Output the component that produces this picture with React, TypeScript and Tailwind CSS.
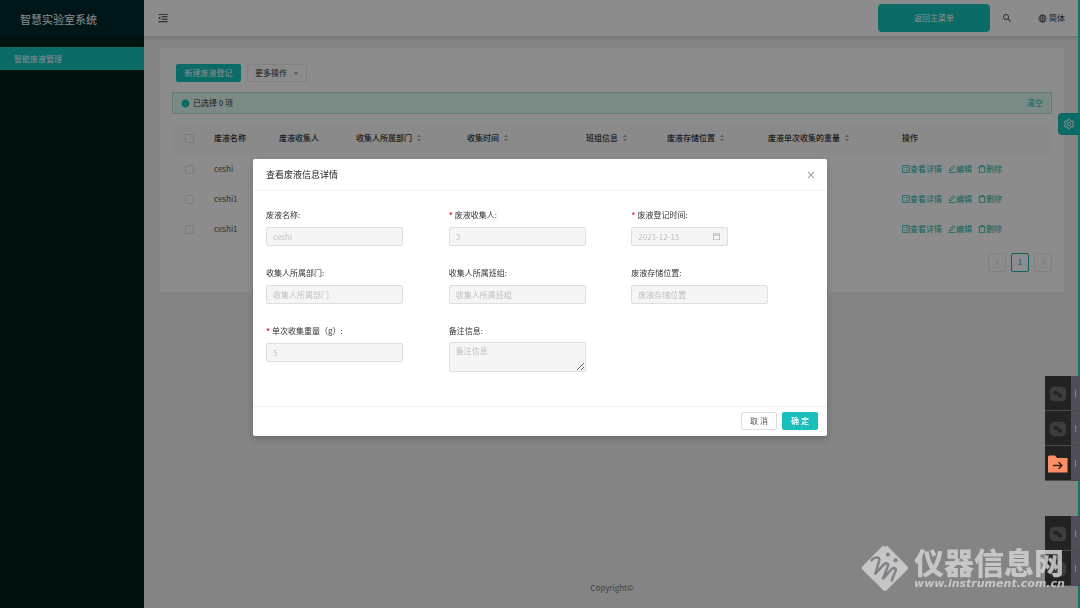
import { useState } from "react";
import {
  AiFillInfoCircle,
  AiOutlineCalendar,
  AiOutlineClose,
  AiOutlineGlobal,
  AiOutlineLeft,
  AiOutlineMenuFold,
  AiOutlineRight,
  AiOutlineSearch,
  AiOutlineSetting,
} from "react-icons/ai";

interface Column {
  title: string;
  width: string;
  sortable?: boolean;
}

interface Field {
  id: string;
  label: string;
  required?: boolean;
  type?: "text" | "date" | "textarea";
  value?: string;
  placeholder?: string;
}

const columns: Column[] = [
  { title: "废液名称", width: "w-[65px]" },
  { title: "废液收集人", width: "w-[77px]" },
  { title: "收集人所属部门", width: "w-[111px]", sortable: true },
  { title: "收集时间", width: "w-[119px]", sortable: true },
  { title: "班组信息", width: "w-[81px]", sortable: true },
  { title: "废液存储位置", width: "w-[101px]", sortable: true },
  { title: "废液单次收集的重量", width: "w-[134px]", sortable: true },
  { title: "操作", width: "w-auto" },
];

const rows = [
  { id: 1, name: "ceshi" },
  { id: 2, name: "ceshi1" },
  { id: 3, name: "ceshi1" },
];

const fields: Field[] = [
  { id: "name", label: "废液名称:", value: "ceshi" },
  { id: "collector", label: "废液收集人:", required: true, value: "3" },
  { id: "date", label: "废液登记时间:", required: true, type: "date", value: "2021-12-15" },
  { id: "dept", label: "收集人所属部门:", placeholder: "收集人所属部门" },
  { id: "team", label: "收集人所属班组:", placeholder: "收集人所属班组" },
  { id: "location", label: "废液存储位置:", placeholder: "废液存储位置" },
  { id: "weight", label: "单次收集重量（g）:", required: true, value: "5" },
  { id: "remark", label: "备注信息:", type: "textarea", placeholder: "备注信息" },
];

function SortIcon() {
  return (
    <svg viewBox="0 0 6 8" className="w-[6px] h-2 ml-1 fill-[#b0b0b0]">
      <path d="M3 0.5 5.2 3H0.8zM3 7.5 0.8 5h4.4z" />
    </svg>
  );
}

function ChevronDown() {
  return (
    <svg viewBox="0 0 6 6" className="size-[6px]" fill="none" stroke="currentColor" strokeWidth="0.7">
      <path d="M0.8 1.8 3 4.2 5.2 1.8" />
    </svg>
  );
}

function ViewIcon() {
  return (
    <svg viewBox="0 0 8 8" className="size-2" fill="none" stroke="currentColor" strokeWidth="0.8">
      <path d="M0.6 0.6h6.6v6.8H0.6zM2.2 2.6h0.8M2.2 5.2h0.8M4 2.6h2M4 5.2h2" />
    </svg>
  );
}

function EditIcon() {
  return (
    <svg viewBox="0 0 8 8" className="size-2" fill="none" stroke="currentColor" strokeWidth="0.8">
      <path d="M0.5 7.4h7M1.4 5.8 1.7 4.2 5.6 0.7 6.9 2 3 5.5z" />
    </svg>
  );
}

function TrashIcon() {
  return (
    <svg viewBox="0 0 8 8" className="size-2" fill="none" stroke="currentColor" strokeWidth="0.8">
      <path d="M0.5 1.8h7M2.6 1.8V0.6h2.8v1.2M1.4 1.8v5.6h5.2V1.8" />
    </svg>
  );
}

function Sidebar() {
  return (
    <aside className="w-36 shrink-0 bg-[#021f1b]">
      <div className="h-9 pl-5 pt-[2px] flex items-center bg-[#02292d] text-[11px] text-white">
        智慧实验室系统
      </div>
      <nav className="mt-[11px]">
        <a href="#waste" className="flex items-center h-[23px] pl-[14px] bg-[#14c4bc] text-white">
          智能废液管理
        </a>
      </nav>
    </aside>
  );
}

function Header() {
  return (
    <header className="flex items-center h-9 pl-[13px] pr-[15px] bg-white shadow-[0_1px_5px_rgba(0,21,41,0.2)]">
      <button type="button" aria-label="menu">
        <AiOutlineMenuFold className="size-3" />
      </button>
      <button type="button" className="ml-auto w-28 h-7 rounded-sm bg-[#14c4bc] text-white">
        返回主菜单
      </button>
      <button type="button" aria-label="search" className="ml-3">
        <AiOutlineSearch className="size-[10px]" />
      </button>
      <button type="button" className="flex items-center gap-[2px] ml-[26px]">
        <AiOutlineGlobal className="size-[9px]" />
        简体
      </button>
    </header>
  );
}

function RowActions() {
  return (
    <div className="flex gap-[6px] text-[#14b8ae]">
      <a href="#view" className="flex items-center">
        <ViewIcon />
        查看详情
      </a>
      <a href="#edit" className="flex items-center">
        <EditIcon />
        编辑
      </a>
      <a href="#delete" className="flex items-center">
        <TrashIcon />
        删除
      </a>
    </div>
  );
}

function WasteTable() {
  return (
    <table className="w-full mt-[9px] table-fixed text-left">
      <thead>
        <tr className="h-[31px] bg-[#fcfcfc] border-b border-[#f8f8f8]">
          <th className="w-[34px]">
            <input type="checkbox" aria-label="select all" className="block mx-auto size-[9px] appearance-none rounded-xs border border-[#dedede] bg-white" />
          </th>
          {columns.map((col) => (
            <th key={col.title} className={`${col.width} pl-2 font-medium`}>
              <span className="flex items-center whitespace-nowrap">
                {col.title}
                {col.sortable && <SortIcon />}
              </span>
            </th>
          ))}
        </tr>
      </thead>
      <tbody>
        {rows.map((row) => (
          <tr key={row.id} className="h-[30px] border-b border-[#fafafa]">
            <td>
              <input type="checkbox" aria-label={row.name} className="block mx-auto size-[9px] appearance-none rounded-xs border border-[#dedede] bg-white" />
            </td>
            <td className="pl-2 text-[#555]">{row.name}</td>
            <td colSpan={6}></td>
            <td className="pl-2">
              <RowActions />
            </td>
          </tr>
        ))}
      </tbody>
    </table>
  );
}

function FormField({ field }: { field: Field }) {
  return (
    <div className="h-[58px]">
      <label htmlFor={field.id} className="flex h-4 items-center whitespace-nowrap text-[#333]">
        {field.required && <span className="mr-[2px] font-bold text-[#e02b36]">*</span>}
        {field.label}
      </label>
      {field.type === "textarea" ? (
        <textarea
          id={field.id}
          disabled
          placeholder={field.placeholder}
          className="block w-3/4 h-[30px] mt-[3px] px-[6px] py-[2px] rounded-xs border border-[#dedede] bg-[#f5f5f5] placeholder:text-[#bfbfbf]"
        />
      ) : field.type === "date" ? (
        <div className="flex items-center w-[97px] h-[19px] mt-1 px-[6px] rounded-xs border border-[#dedede] bg-[#f5f5f5] text-[#bfbfbf]">
          <input id={field.id} type="text" disabled value={field.value} className="min-w-0 flex-1" />
          <AiOutlineCalendar className="size-[9px] text-[#aaa]" />
        </div>
      ) : (
        <input
          id={field.id}
          type="text"
          disabled
          value={field.value}
          placeholder={field.placeholder}
          className="block w-3/4 h-[19px] mt-1 px-[6px] rounded-xs border border-[#dedede] bg-[#f5f5f5] text-[#bfbfbf] placeholder:text-[#bfbfbf]"
        />
      )}
    </div>
  );
}

function DetailModal({ onClose }: { onClose: () => void }) {
  return (
    <div className="fixed inset-0 z-20 flex items-start justify-center pt-[159px] bg-black/45">
      <div role="dialog" aria-labelledby="modal-title" className="w-[574px] max-w-full rounded-xs bg-white shadow-[0_3px_9px_rgba(0,0,0,0.2)]">
        <div className="flex items-center justify-between h-8 pl-[13px] pr-[11px] border-b border-[#f3f3f3]">
          <h2 id="modal-title" className="text-[9px] text-[#262626]">查看废液信息详情</h2>
          <button type="button" aria-label="close" onClick={onClose}>
            <AiOutlineClose className="size-[10px] text-[#8c8c8c]" />
          </button>
        </div>
        <form className="grid grid-cols-3 px-[13px] pt-4 pb-[25px]">
          {fields.map((field) => (
            <FormField key={field.id} field={field} />
          ))}
        </form>
        <div className="flex justify-end gap-[5px] pt-[5px] pb-[6px] pr-[9px] border-t border-[#f0f0f0]">
          <button type="button" onClick={onClose} className="w-9 h-[18px] rounded-xs border border-[#dedede] text-[#555]">
            取 消
          </button>
          <button type="button" onClick={onClose} className="w-9 h-[18px] rounded-xs bg-[#1abfbc] font-medium text-white">
            确 定
          </button>
        </div>
      </div>
    </div>
  );
}

function LinkTile() {
  return (
    <svg viewBox="0 0 20 20" className="size-[18px]">
      <rect x="1" y="2" width="18" height="16" rx="5" fill="#3c3d3c" />
      <path d="M5 7.5c1.5-2 4-1.5 5 .5l4 2.5c1.5 1.5 0 4-2 3.5-1.5 0-2-1.5-2.5-3L6.5 10.5C5 10.5 4 9 5 7.5z" fill="#232423" />
    </svg>
  );
}

function FolderTile() {
  return (
    <svg viewBox="0 0 20 18" className="w-5 h-[18px]">
      <path d="M0 1.5 1 0.5h6l2 2.5h10.5V17.5H0z" fill="#ff8f66" />
      <path d="M5 10.5h9M10.5 7l3.5 3.5-3.5 3.5" fill="none" stroke="#3a2018" strokeWidth="1.4" />
    </svg>
  );
}

function DockItem({ folder }: { folder?: boolean }) {
  return (
    <div className="flex h-[35px] border-b border-[#4a4a4b] bg-[#222322]">
      <div className="flex items-center justify-center w-[26px] pt-px">{folder ? <FolderTile /> : <LinkTile />}</div>
      <div className="flex items-center justify-center w-[9px] bg-[#504f59]">
        <span className="w-px h-[7px] bg-[#85848e]"></span>
      </div>
    </div>
  );
}

function Watermark() {
  return (
    <div className="fixed right-4 bottom-4 z-40 flex items-end gap-[5px] text-[#d0d1d3]/85 pointer-events-none">
      <svg viewBox="0 0 50 50" className="size-12">
        <path
          d="M21 3.5 23 1.5l2 1.5 2-1.5 21 21.5q2 2 0 4L27 48q-2 2-4 0L2 27q-2-2 0-4z"
          fill="currentColor"
        />
        <path
          d="M11 17c3-4 9-4 8 0l-4 14 9-10c3-2 5 0 4 2l-5 13 9-10c3-2 5 0 4 2l-4 10"
          fill="none"
          stroke="#808183"
          strokeWidth="2.6"
          strokeLinecap="round"
          strokeLinejoin="round"
        />
        <circle cx="28" cy="11" r="2.2" fill="#808183" />
        <circle cx="36" cy="17" r="2.2" fill="#808183" />
      </svg>
      <div className="w-[150px] pb-[2px] whitespace-nowrap">
        <div className="font-['Liberation_Sans','Noto_Sans_CJK_SC',sans-serif] text-[30px] leading-7 font-black">仪器信息网</div>
        <div className="font-['DejaVu_Sans',sans-serif] text-[11px] leading-3 font-bold italic">www.instrument.com.cn</div>
      </div>
    </div>
  );
}

export default function App() {
  const [open, setOpen] = useState<boolean>(true);

  return (
    <div className="flex min-h-screen bg-[#f0f1f2] font-['Noto_Sans_CJK_SC',sans-serif] text-[8px] leading-3 text-[#333]">
      <Sidebar />
      <div className="flex flex-col flex-1 min-w-0">
        <Header />
        <main className="mx-4 mt-3 px-3 pt-4 pb-5 bg-white">
          <div className="flex gap-[6px] pl-1">
            <button type="button" className="w-[65px] h-[18px] rounded-xs bg-[#14c4bc] text-white">
              新建废液登记
            </button>
            <button type="button" className="flex items-center justify-center gap-[6px] w-[60px] h-[18px] rounded-xs border border-[#ececec]">
              更多操作
              <ChevronDown />
            </button>
          </div>
          <div className="flex items-center h-[22px] mt-[10px] px-2 border border-[#b4e2d9] bg-[#e2fbf5]">
            <AiFillInfoCircle className="size-[9px] mr-[3px] text-[#14b8ae]" />
            <span>已选择 0 项</span>
            <a href="#clear" className="ml-auto text-[#14b8ae]">清空</a>
          </div>
          <WasteTable />
          <div className="flex justify-end gap-[5px] mt-2">
            <button type="button" aria-label="previous page" className="flex items-center justify-center w-[18px] h-[19px] rounded-xs border border-[#ebebeb] text-[#bbb]">
              <AiOutlineLeft className="size-[7px]" />
            </button>
            <button type="button" className="w-[18px] h-[19px] rounded-xs border border-[#14b8ae] text-[#14b8ae]">
              1
            </button>
            <button type="button" aria-label="next page" className="flex items-center justify-center w-[18px] h-[19px] rounded-xs border border-[#ebebeb] text-[#bbb]">
              <AiOutlineRight className="size-[7px]" />
            </button>
          </div>
        </main>
        <footer className="mt-auto pb-[14px] text-center text-[#777]">Copyright©</footer>
      </div>

      <div className="fixed inset-y-0 right-0 z-10 w-[2px] bg-[#2fd0b8]"></div>
      <button
        type="button"
        aria-label="settings"
        className="fixed right-0 top-[113px] z-10 flex items-center pl-[5px] w-[22px] h-[22px] rounded-l-sm bg-[#14c4bc] text-white"
      >
        <AiOutlineSetting className="size-3" />
      </button>

      {open && <DetailModal onClose={() => setOpen(false)} />}

      {/* docked shortcuts on the right edge */}
      <div className="fixed right-0 top-[376px] z-30">
        <DockItem />
        <DockItem />
        <DockItem folder />
      </div>
      <div className="fixed right-0 top-[516px] z-30">
        <DockItem />
        <DockItem />
      </div>
      <Watermark />
    </div>
  );
}
